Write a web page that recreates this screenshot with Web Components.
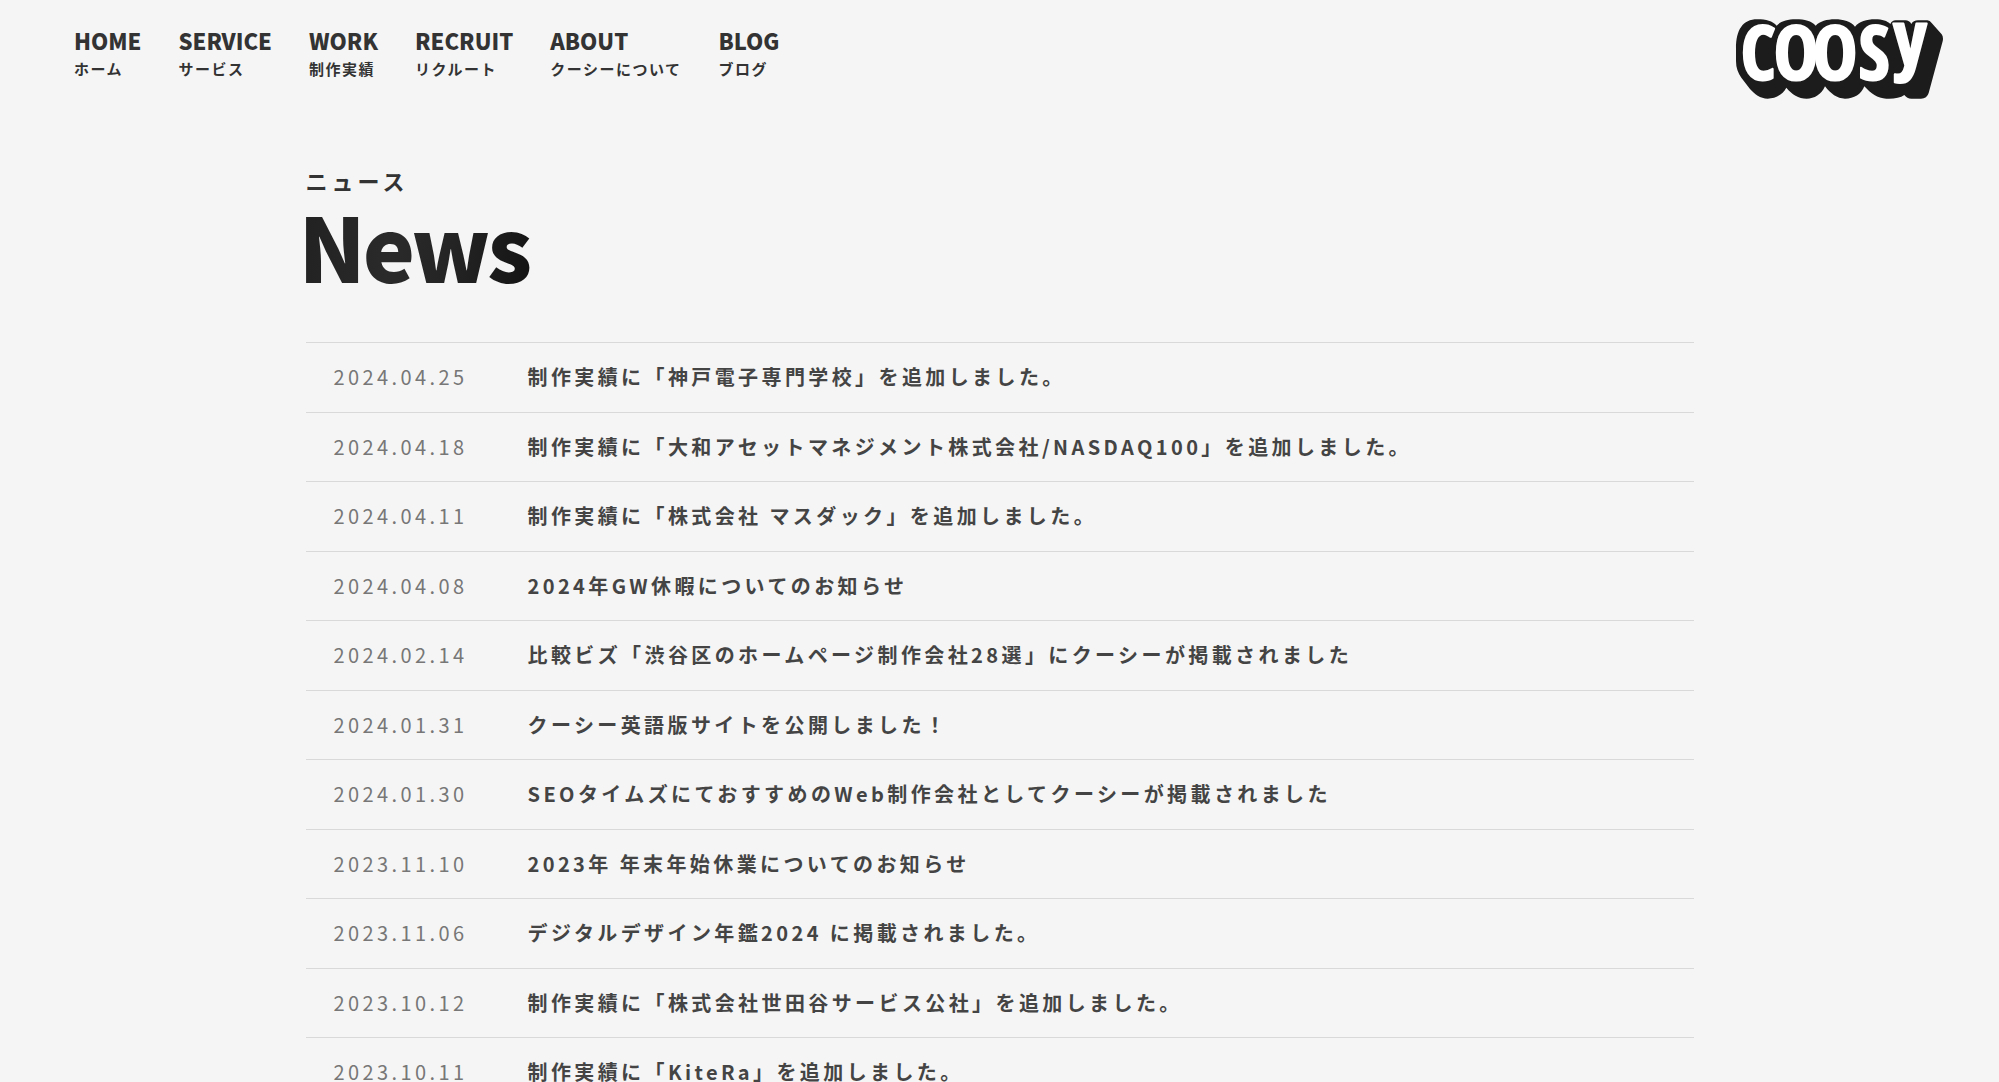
<!DOCTYPE html>
<html lang="ja">
<head>
<meta charset="utf-8">
<meta name="viewport" content="width=device-width, initial-scale=1">
<title>News | COOSY</title>
<style>
  html { background: #f5f5f5; }
  body { margin: 0; color: #333; font-family: "Noto Sans CJK JP", sans-serif; }
</style>
</head>
<body>
<site-header>
  <nav-item href="#home" label="HOME">ホーム</nav-item>
  <nav-item href="#service" label="SERVICE">サービス</nav-item>
  <nav-item href="#work" label="WORK">制作実績</nav-item>
  <nav-item href="#recruit" label="RECRUIT">リクルート</nav-item>
  <nav-item href="#about" label="ABOUT">クーシーについて</nav-item>
  <nav-item href="#blog" label="BLOG">ブログ</nav-item>
  <coosy-logo slot="logo"></coosy-logo>
</site-header>
<news-page>
  <page-title slot="title" label="ニュース">News</page-title>
  <news-item date="2024.04.25">制作実績に「神戸電子専門学校」を追加しました。</news-item>
  <news-item date="2024.04.18">制作実績に「大和アセットマネジメント株式会社/NASDAQ100」を追加しました。</news-item>
  <news-item date="2024.04.11">制作実績に「株式会社 マスダック」を追加しました。</news-item>
  <news-item date="2024.04.08">2024年GW休暇についてのお知らせ</news-item>
  <news-item date="2024.02.14">比較ビズ「渋谷区のホームページ制作会社28選」にクーシーが掲載されました</news-item>
  <news-item date="2024.01.31">クーシー英語版サイトを公開しました！</news-item>
  <news-item date="2024.01.30">SEOタイムズにておすすめのWeb制作会社としてクーシーが掲載されました</news-item>
  <news-item date="2023.11.10">2023年 年末年始休業についてのお知らせ</news-item>
  <news-item date="2023.11.06">デジタルデザイン年鑑2024 に掲載されました。</news-item>
  <news-item date="2023.10.12">制作実績に「株式会社世田谷サービス公社」を追加しました。</news-item>
  <news-item date="2023.10.11">制作実績に「KiteRa」を追加しました。</news-item>
</news-page>

<script>
const define = (name, render) => customElements.define(name, class extends HTMLElement {
  constructor() {
    super();
    this.attachShadow({ mode: 'open' }).innerHTML = render(this);
  }
});

define('site-header', () => `
  <style>
    :host { display: block; }
    header { display: flex; justify-content: space-between; align-items: flex-start; padding: 18px 55px 0 74px; }
    nav { display: flex; gap: 37px; padding-top: 7px; }
  </style>
  <header><nav><slot></slot></nav><slot name="logo"></slot></header>`);

define('nav-item', el => `
  <style>
    :host { display: block; }
    a { display: block; color: inherit; text-decoration: none; white-space: nowrap; }
    .en { display: block; font-size: 22px; font-weight: 900; line-height: 30px; }
    .ja { display: block; font-size: 15px; font-weight: 700; line-height: 28px; letter-spacing: 0.1em; }
  </style>
  <a href="${el.getAttribute('href')}"><span class="en">${el.getAttribute('label')}</span><span class="ja"><slot></slot></span></a>`);

define('coosy-logo', () => `
  <style>
    :host { display: block; }
    a { display: block; }
    svg { display: block; overflow: visible; }
    text { font: 700 75px "Open Sans Condensed", "Liberation Sans Narrow", sans-serif; fill: #fff; stroke: #fff; stroke-width: 2; stroke-linejoin: round; text-anchor: middle; }
  </style>
  <a href="#home" aria-label="COOSY">
    <svg width="208" height="82" viewBox="48 39 624 246">
      <path fill="#1c1c1c" d="M48 130C48 75 68 43 112 43C138 43 158 48 170 62C182 49 202 43 227 43C254 43 275 48 287 62C300 49 320 43 345 43C370 43 393 49 405 65C418 50 440 43 465 43C488 43 501 48 511 57Q516 46 527 46H556Q568 46 574 57Q580 46 594 46H622Q630 46 635 54L665 88Q671 96 668 109L626 264Q621 281 603 281H574Q561 281 553 270C541 279 521 282 499 281C472 280 453 266 433 244C424 268 402 281 375 281C351 281 332 266 315 244C304 269 283 281 260 281C235 281 216 268 199 248C187 270 165 281 143 281C121 281 103 267 90 252L64 218Q48 196 48 168Z"/>
      <g transform="translate(48 39) scale(3)">
        <text x="22 60 99 138 174" y="62 62 62 62 47">COOSy</text>
      </g>
    </svg>
  </a>`);

define('news-page', () => `
  <style>
    :host { display: block; }
    main { width: 1388px; max-width: 90%; margin: 62px auto 0; }
    .list { margin-top: 50px; border-top: 1px solid #d9d9d9; }
  </style>
  <main><slot name="title"></slot><div class="list" role="list"><slot></slot></div></main>`);

define('page-title', el => `
  <style>
    :host { display: block; }
    p { margin: 0; font-size: 22px; font-weight: 700; line-height: 36px; letter-spacing: 4px; }
    h1 { margin: 0 0 0 -7px; width: fit-content; font-size: 88px; font-weight: 900; line-height: 94px; letter-spacing: -3px;
         padding-right: 4px; color: transparent; background: linear-gradient(100deg, #212121 0%, #2a2a2a 40%, #242424 65%, #131313 100%); -webkit-background-clip: text; background-clip: text; }
  </style>
  <p>${el.getAttribute('label')}</p><h1><slot></slot></h1>`);

define('news-item', el => `
  <style>
    :host { display: block; border-bottom: 1px solid #d9d9d9; }
    a { display: flex; padding: 20px 28px; color: #444; text-decoration: none; font-size: 20px; line-height: 1.425; letter-spacing: 0.17em; }
    time { flex: none; width: 194px; color: #777; }
    .t { font-weight: 700; }
  </style>
  <a href="#news"><time>${el.getAttribute('date')}</time><span class="t"><slot></slot></span></a>`);

document.querySelectorAll('news-item').forEach(el => el.setAttribute('role', 'listitem'));
</script>
</body>
</html>
